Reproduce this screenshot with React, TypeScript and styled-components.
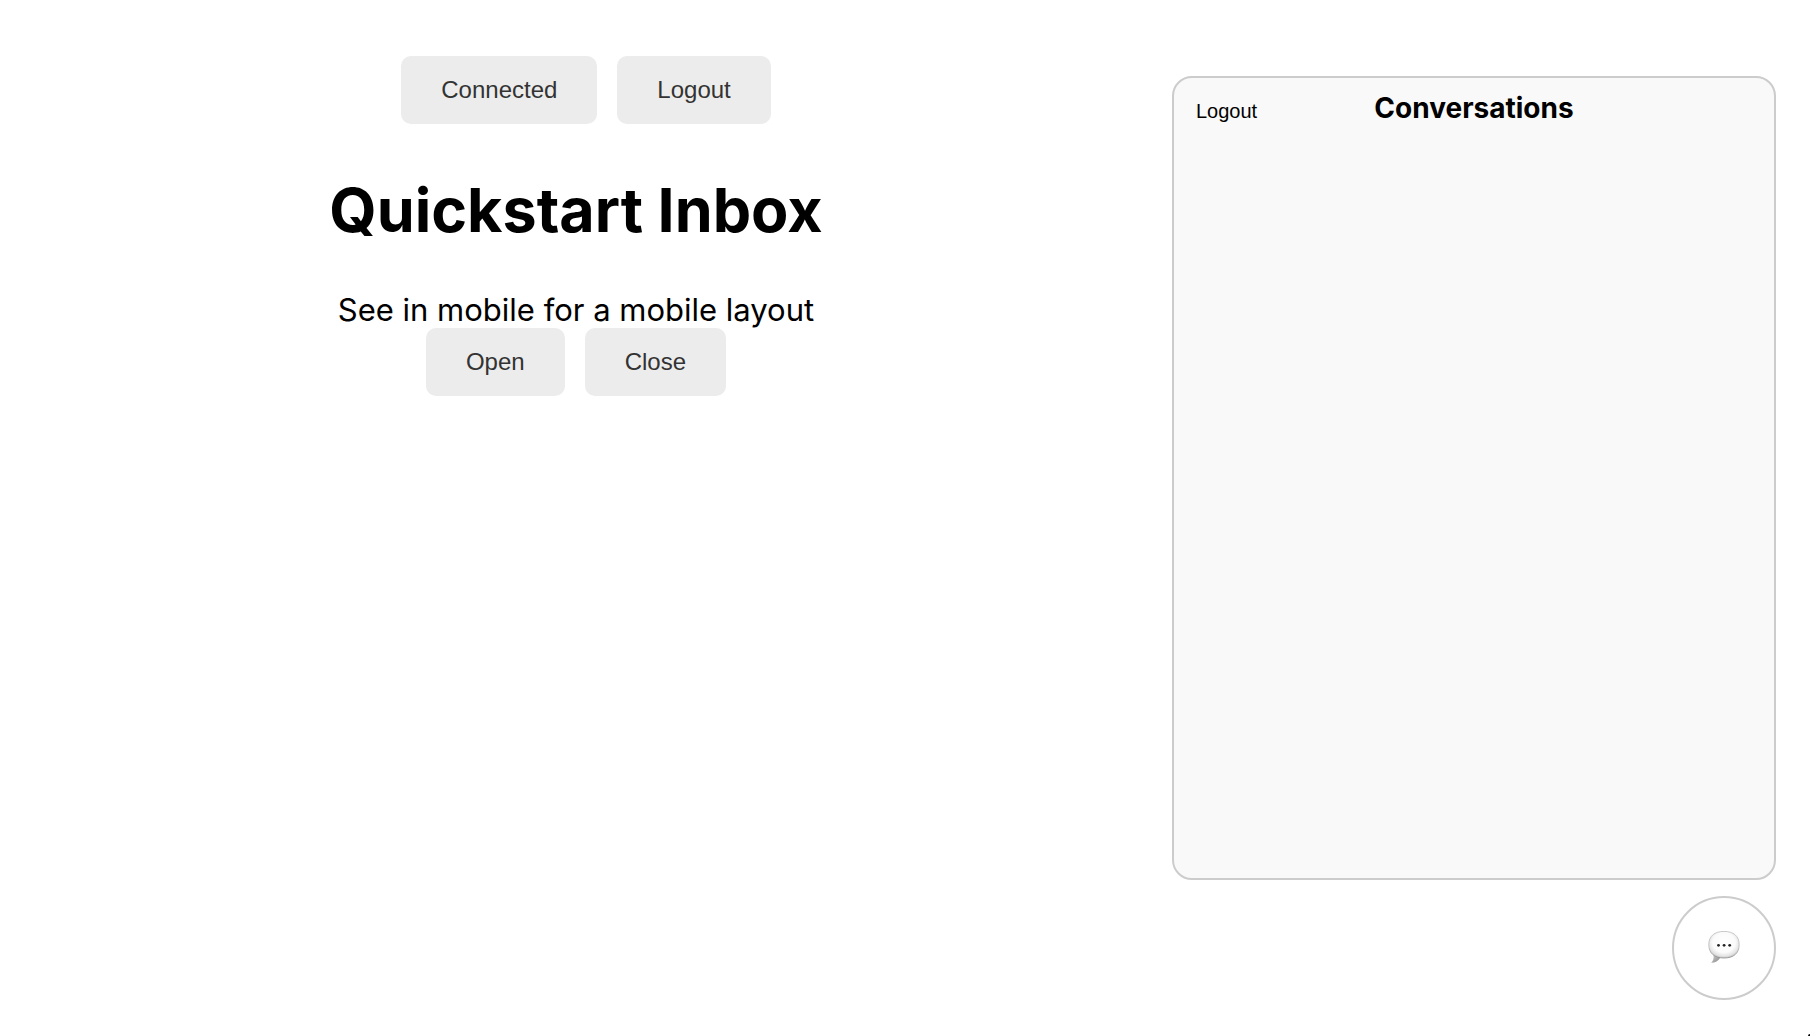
import React, { useState } from "react";
import styled, { createGlobalStyle } from "styled-components";

const GlobalStyle = createGlobalStyle`
  *, *::before, *::after { box-sizing: border-box; }
  body {
    margin: 0;
    background: #fff;
    color: #000;
    font-family: Inter, "Liberation Sans", sans-serif;
  }
`;

const Page = styled.div`
  display: flex;
  align-items: flex-start;
  min-height: 100vh;
`;

const Main = styled.main`
  flex: 1;
  min-width: 0;
  display: flex;
  flex-direction: column;
  align-items: center;
  padding: 56px 20px 0 0;
`;

const ButtonRow = styled.div<{ $indent?: boolean }>`
  display: flex;
  gap: 20px;
  padding-left: ${(p) => (p.$indent ? "20px" : "0")};
`;

const Button = styled.button`
  height: 68px;
  padding: 0 40px;
  border: 0;
  border-radius: 10px;
  background: #ececec;
  color: #333;
  font: 24px "Liberation Sans", Arial, sans-serif;
  cursor: pointer;
`;

const Title = styled.h1`
  margin: 48px 0 44px;
  font-size: 61px;
  line-height: 76px;
  font-weight: 700;
`;

const Subtitle = styled.p`
  margin: 0;
  font-size: 31px;
  line-height: 36px;
`;

const Widget = styled.aside`
  flex: none;
  width: 604px;
  max-width: 100%;
  margin: 76px 34px 36px 0;
  display: flex;
  flex-direction: column;
  align-items: flex-end;
  gap: 16px;
`;

const Panel = styled.section`
  width: 100%;
  min-height: 804px;
  padding: 12px 22px;
  border: 2px solid #ccc;
  border-radius: 20px;
  background: #f9f9f9;
`;

const PanelHeader = styled.header`
  display: grid;
  grid-template-columns: 1fr auto 1fr;
  align-items: baseline;
`;

const PanelTitle = styled.h2`
  margin: 0;
  font-size: 28px;
  line-height: 36px;
  font-weight: 700;
`;

const TextButton = styled.button`
  justify-self: start;
  padding: 0;
  border: 0;
  background: none;
  color: #000;
  font: 20px "Liberation Sans", Arial, sans-serif;
  cursor: pointer;
`;

const Launcher = styled.button`
  display: flex;
  align-items: center;
  justify-content: center;
  width: 104px;
  height: 104px;
  padding: 0;
  border: 2px solid #ccc;
  border-radius: 50%;
  background: #fff;
  cursor: pointer;
`;

const CornerGrip = styled.span`
  position: fixed;
  right: 0;
  bottom: 0;
  width: 2px;
  height: 2px;
  border-top-left-radius: 2px;
  background: #000;
`;

function SpeechBubble() {
  return (
    <svg width="32" height="34" viewBox="0 0 32 34" aria-hidden="true">
      <defs>
        <radialGradient id="bubble" cx="50%" cy="42%" r="62%">
          <stop offset="0" stopColor="#fff" />
          <stop offset="0.6" stopColor="#fbfbfb" />
          <stop offset="0.82" stopColor="#e4e4e4" />
          <stop offset="1" stopColor="#b4b4b4" />
        </radialGradient>
        <linearGradient id="rim" x1="0" y1="0" x2="0" y2="1">
          <stop offset="0" stopColor="#bcbcbc" />
          <stop offset="0.6" stopColor="#b8b8b8" />
          <stop offset="1" stopColor="#888" />
        </linearGradient>
        <linearGradient id="tail" x1="0" y1="0" x2="1" y2="1">
          <stop offset="0" stopColor="#d0d0d0" />
          <stop offset="1" stopColor="#858585" />
        </linearGradient>
      </defs>
      <path d="M5.4 24C6 27.400 5.2 30 3.2 31.800c4 0 7.200-2 9.200-5.300z" fill="url(#tail)" />
      <path
        d="M16 .4c9.600 0 15.200 4.800 15.200 13.300S25.600 27 16 27 .8 22.200.8 13.700 6.400.4 16 .4z"
        fill="url(#bubble)"
        stroke="url(#rim)"
        strokeWidth="0.8"
      />
      <g fill="#222">
        <circle cx="10.500" cy="14.300" r="1.400" />
        <circle cx="16.100" cy="14.300" r="1.400" />
        <circle cx="21.700" cy="14.300" r="1.400" />
      </g>
    </svg>
  );
}

export default function App() {
  const [open, setOpen] = useState(true);
  return (
    <>
      <GlobalStyle />
      <Page>
        <Main>
          <ButtonRow $indent>
            <Button type="button">Connected</Button>
            <Button type="button">Logout</Button>
          </ButtonRow>
          <Title>Quickstart Inbox</Title>
          <Subtitle>See in mobile for a mobile layout</Subtitle>
          <ButtonRow>
            <Button type="button" onClick={() => setOpen(true)}>Open</Button>
            <Button type="button" onClick={() => setOpen(false)}>Close</Button>
          </ButtonRow>
        </Main>
        <Widget>
          {open && (
            <Panel>
              <PanelHeader>
                <TextButton type="button">Logout</TextButton>
                <PanelTitle>Conversations</PanelTitle>
              </PanelHeader>
            </Panel>
          )}
          <Launcher type="button" aria-label="Toggle conversations" onClick={() => setOpen(!open)}>
            <SpeechBubble />
          </Launcher>
        </Widget>
      </Page>
      <CornerGrip aria-hidden="true" />
    </>
  );
}
